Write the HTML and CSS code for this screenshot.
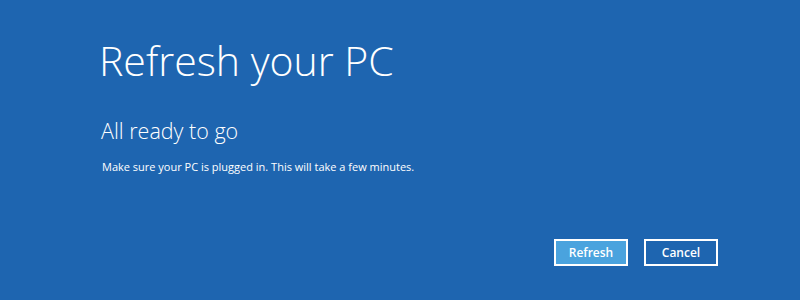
FILE: index.html
```html
<!DOCTYPE html>
<html>
<head>
<meta charset="utf-8">
<link rel="stylesheet" href="styles.css">
</head>
<body>
<div class="page">
  <h1 class="title">Refresh your PC</h1>
  <h2 class="subtitle">All ready to go</h2>
  <p class="note">Make sure your PC is plugged in. This will take a few minutes.</p>
  <div class="actions">
    <button class="btn primary">Refresh</button>
    <button class="btn">Cancel</button>
  </div>
</div>
</body>
</html>
```
FILE: styles.css
```css
html, body {
  margin: 0;
  padding: 0;
  background: #1e65b0;
}
.page {
  width: 800px;
  height: 300px;
  box-sizing: border-box;
  padding: 32px 82px 0 99px;
  color: #fff;
  font-family: "Open Sans", "Noto Sans", sans-serif;
  display: flex;
  flex-direction: column;
}
.title {
  margin: 0;
  font-weight: 300;
  font-size: 41px;
  line-height: 56px;
}
.subtitle {
  margin: 29px 0 0 2px;
  font-weight: 300;
  font-size: 21.5px;
  line-height: 28px;
}
.note {
  margin: 14px 0 0 3px;
  font-size: 11px;
  line-height: 16px;
}
.actions {
  margin-top: 64px;
  display: flex;
  justify-content: flex-end;
  gap: 16px;
}
.btn {
  width: 74px;
  height: 27px;
  border: 2px solid #fff;
  background: transparent;
  color: #fff;
  font-family: "Open Sans", sans-serif;
  font-weight: 600;
  font-size: 12px;
  padding: 0;
}
.btn.primary {
  background: #4aa3de;
}
```
